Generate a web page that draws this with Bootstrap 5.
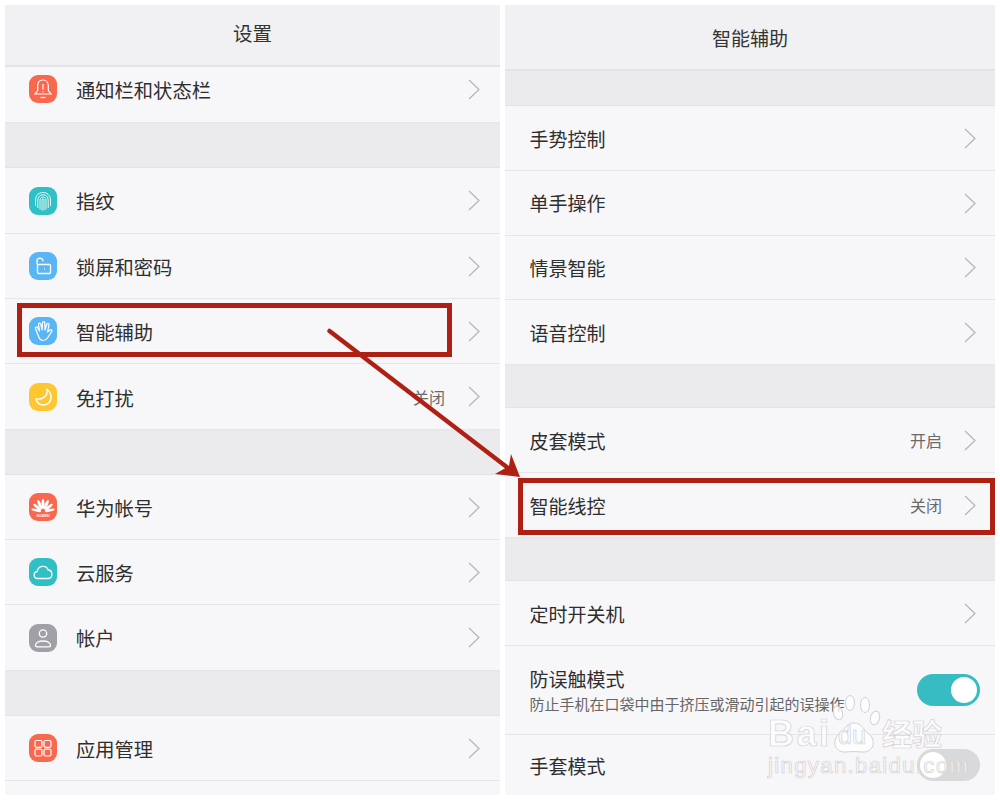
<!DOCTYPE html>
<html lang="zh">
<head>
<meta charset="utf-8">
<title>设置</title>
<link href="https://cdn.jsdelivr.net/npm/bootstrap@5.3.0/dist/css/bootstrap.min.css" rel="stylesheet">
<style>
html,body{height:800px;overflow:hidden;background:#fff}
body{font-family:"Noto Sans CJK SC","Liberation Sans",sans-serif;color:#333;position:relative}
.stage{width:1000px;height:800px;padding:5px;gap:5px}
.pane{background:#f7f6f8;height:790px;overflow:hidden;flex:none}
.pane-l{width:495px}
.pane-r{width:490px}
.head{font-size:19px;color:#333;background:#f1f0f2;border-bottom:2px solid #e3e2e4;line-height:1}
.head-l{height:62px;padding-bottom:4px;font-size:19.5px}
.head-r{height:66px}
.gap-band{background:#ebeaec;border-bottom:1px solid #e3e2e4;border-top:1px solid #e9e8ea}
.row-item{border-bottom:1px solid #e6e5e7;font-size:19px;line-height:1;color:#2e2e2e}
.pane-l .row-item{padding:0 20px 0 24px;font-size:19.3px}
.pane-r .row-item{padding:0 19px 0 24.500px}
.row-first{padding-bottom:11px!important}
.txt-up{position:relative;top:-1px}
.txt-a{position:relative;top:1px}
.txt-b{position:relative;top:2px}
.appicon{width:28px;height:28px;border-radius:9px;margin-right:19px;flex:none}
.appicon svg{width:28px;height:28px;display:block}
.c-red{background:#f9684e}.c-teal{background:#2fbfc4}.c-blue{background:#5ab5f5}.c-yel{background:#fec731}.c-gray{background:#a0a0a6}
.val{font-size:16px;color:#6a6a6a;margin-right:23px}
.pane-r .val{margin-right:22px}
.chev{width:12px;height:21px;flex:none}
.subtxt{font-size:15px;color:#666;line-height:1;margin-top:8px;white-space:nowrap}
.sw{width:63px;height:32px;border-radius:16px;flex:none;position:relative;margin-right:-4px}
.sw i{position:absolute;top:3px;width:26px;height:26px;border-radius:50%;background:#fff}
.sw-on{background:#38bcc4}.sw-on i{right:3px}
.sw-off{background:#d9d8da}.sw-off i{left:3px}
.overlay{position:absolute;left:0;top:0;width:1000px;height:800px;pointer-events:none}
.wm{position:absolute;left:766px;top:692px;width:184px;height:90px;pointer-events:none}
.wm span{position:absolute;color:rgba(255,255,255,.75);-webkit-text-stroke:.7px #d2d0d3;line-height:1;white-space:nowrap}
.wm-bai{left:2px;top:23.500px;font:700 36px/1 "Liberation Sans",sans-serif;letter-spacing:2.500px}
.wm-du{left:72px;top:31px;font:400 25px/1 "Liberation Sans",sans-serif}
.wm-jy{left:116px;top:25px;font:700 30px/1 "Noto Sans CJK SC",sans-serif}
.wm-url{left:2px;top:63px;font:400 22px/1 "Liberation Sans",sans-serif;letter-spacing:1.400px}
.wm svg{position:absolute;left:60px;top:0;width:60px;height:64px}
</style>
</head>
<body>
<svg width="0" height="0" class="position-absolute">
  <symbol id="chev" viewBox="0 0 12 21"><path d="M1 1l10 9.500L1 20" fill="none" stroke="#b5b4b7" stroke-width="1.200"/></symbol>
</svg>
<div class="stage d-flex">
  <div class="pane pane-l">
    <div class="head head-l d-flex align-items-center justify-content-center">设置</div>
    <div class="row-item row-first d-flex align-items-center" style="height:56px"><div class="appicon c-red"><svg viewBox="0 0 28 28" fill="none" stroke="#fff" stroke-width="1.200"><path d="M14 5c-3.600 0-5.300 2.800-5.300 5.800v4.700l-2.700 3.500h16l-2.700-3.500v-4.700C19.300 7.800 17.600 5 14 5z"/><path d="M11.500 22.500h5"/><path d="M14 9v5.500M14 16v1.200"/></svg></div><span class="txt-b">通知栏和状态栏</span><svg class="chev ms-auto"><use href="#chev"/></svg></div>
    <div class="gap-band" style="height:45px"></div>
    <div class="row-item d-flex align-items-center" style="height:66px"><div class="appicon c-teal"><svg viewBox="0 0 28 28" fill="none" stroke="#fff" stroke-width=".9"><path d="M6.500 19V13c0-10 15-10 15 0v6"/><path d="M8.800 21V13c0-7 10.400-7 10.400 0v8"/><path d="M11 22.500V13c0-4 6-4 6 0v9.500"/><path d="M13 23.500V13c0-1.400 2-1.400 2 0v10.500"/></svg></div><span class="txt-a">指纹</span><svg class="chev ms-auto"><use href="#chev"/></svg></div>
    <div class="row-item d-flex align-items-center" style="height:65px"><div class="appicon c-blue"><svg viewBox="0 0 28 28" fill="none" stroke="#fff" stroke-width="1.300"><rect x="8.500" y="12.500" width="13" height="9" rx="1"/><path d="M8 12.500V9.200a3 3 0 0 1 6 0"/><path d="M15 17h.8"/></svg></div><span class="txt-b">锁屏和密码</span><svg class="chev ms-auto"><use href="#chev"/></svg></div>
    <div class="row-item d-flex align-items-center" style="height:65px"><div class="appicon c-blue"><svg viewBox="0 0 28 28" fill="none" stroke="#fff" stroke-width="1.200" stroke-linecap="round" stroke-linejoin="round"><path d="M9 18L6.500 11.500c-.5-1.500 1.500-2.200 2.200-.8L10.500 14 9.500 7.500c-.2-1.600 2-2 2.300-.4L13 13l.5-7.200c.1-1.600 2.300-1.500 2.300 0L16 13l1.800-5.700c.4-1.500 2.500-1 2.200.5L18.500 15l2.500-2c1.200-1 2.600.5 1.700 1.600L18.500 21c-1 1.500-2.500 2.500-4.500 2.500-2.500 0-4-2-5-5.500z"/></svg></div><span class="txt-b">智能辅助</span><svg class="chev ms-auto"><use href="#chev"/></svg></div>
    <div class="row-item d-flex align-items-center" style="height:66px"><div class="appicon c-yel"><svg viewBox="0 0 28 28" fill="none" stroke="#fff" stroke-width="1.400"><path d="M18 6.500c1 6-3.500 10.500-11 9.500 1 4 4 6 7.500 6 4.500 0 7.500-3.500 7.500-7.500 0-3.500-1.500-6.500-4-8z"/></svg></div><span class="txt-b">免打扰</span><span class="val ms-auto">关闭</span><svg class="chev"><use href="#chev"/></svg></div>
    <div class="gap-band" style="height:45px"></div>
    <div class="row-item d-flex align-items-center" style="height:65px"><div class="appicon c-red"><svg viewBox="0 0 28 28" fill="#fff"><g><ellipse cx="14" cy="11" rx="1.500" ry="5"/><ellipse cx="14" cy="11" rx="1.500" ry="5" transform="rotate(-24 14 19)"/><ellipse cx="14" cy="11" rx="1.500" ry="5" transform="rotate(24 14 19)"/><ellipse cx="14" cy="11.500" rx="1.500" ry="5" transform="rotate(-50 14 19)"/><ellipse cx="14" cy="11.500" rx="1.500" ry="5" transform="rotate(50 14 19)"/><ellipse cx="14" cy="12" rx="1.300" ry="5" transform="rotate(-76 14 19)"/><ellipse cx="14" cy="12" rx="1.300" ry="5" transform="rotate(76 14 19)"/></g><text x="14" y="24" text-anchor="middle" font-size="3.300" font-family="Liberation Sans" font-weight="700" opacity=".9">HUAWEI</text></svg></div><span class="txt-b">华为帐号</span><svg class="chev ms-auto"><use href="#chev"/></svg></div>
    <div class="row-item d-flex align-items-center" style="height:65px"><div class="appicon c-teal"><svg viewBox="0 0 28 28" fill="none" stroke="#fff" stroke-width="1.300"><path d="M9 20.500c-5 0-5-6.500-.8-7 .8-6 9-7 11-1.500 4.500 0 5.500 8.500 0 8.500z"/></svg></div><span class="txt-b">云服务</span><svg class="chev ms-auto"><use href="#chev"/></svg></div>
    <div class="row-item d-flex align-items-center" style="height:66px"><div class="appicon c-gray"><svg viewBox="0 0 28 28" fill="none" stroke="#fff" stroke-width="1.300"><circle cx="14" cy="9.500" r="3.700"/><path d="M6.500 21.500c0-6 15-6 15 0 0 1-.8 1.300-1.500 1.300H8c-.7 0-1.500-.3-1.500-1.300z"/></svg></div><span class="txt-a">帐户</span><svg class="chev ms-auto"><use href="#chev"/></svg></div>
    <div class="gap-band" style="height:45px"></div>
    <div class="row-item d-flex align-items-center" style="height:65px"><div class="appicon c-red"><svg viewBox="0 0 28 28" fill="none" stroke="#fff" stroke-width="1.200"><rect x="6" y="6.500" width="7" height="6.800" rx="1.500"/><rect x="15" y="6.500" width="7" height="6.800" rx="1.500"/><rect x="6" y="15.200" width="7" height="6.800" rx="1.500"/><rect x="15" y="15.200" width="7" height="6.800" rx="1.500"/></svg></div><span class="txt-b">应用管理</span><svg class="chev ms-auto"><use href="#chev"/></svg></div>
  </div>
  <div class="pane pane-r">
    <div class="head head-r d-flex align-items-center justify-content-center">智能辅助</div>
    <div class="gap-band" style="height:35px;border-top:0"></div>
    <div class="row-item d-flex align-items-center" style="height:65px"><span>手势控制</span><svg class="chev ms-auto"><use href="#chev"/></svg></div>
    <div class="row-item d-flex align-items-center" style="height:65px"><span class="txt-up">单手操作</span><svg class="chev ms-auto"><use href="#chev"/></svg></div>
    <div class="row-item d-flex align-items-center" style="height:64px"><span>情景智能</span><svg class="chev ms-auto"><use href="#chev"/></svg></div>
    <div class="row-item d-flex align-items-center" style="height:65px"><span>语音控制</span><svg class="chev ms-auto"><use href="#chev"/></svg></div>
    <div class="gap-band" style="height:43px"></div>
    <div class="row-item d-flex align-items-center" style="height:65px"><span>皮套模式</span><span class="val ms-auto">开启</span><svg class="chev"><use href="#chev"/></svg></div>
    <div class="row-item d-flex align-items-center" style="height:65px"><span>智能线控</span><span class="val ms-auto">关闭</span><svg class="chev"><use href="#chev"/></svg></div>
    <div class="gap-band" style="height:43px"></div>
    <div class="row-item d-flex align-items-center" style="height:65px"><span>定时开关机</span><svg class="chev ms-auto"><use href="#chev"/></svg></div>
    <div class="row-item d-flex align-items-center" style="height:89px"><div><div>防误触模式</div><div class="subtxt">防止手机在口袋中由于挤压或滑动引起的误操作</div></div><div class="sw sw-on ms-auto"><i></i></div></div>
    <div class="row-item d-flex align-items-center border-0" style="height:60px"><span>手套模式</span><div class="sw sw-off ms-auto"><i></i></div></div>
  </div>
</div>
<div class="wm">
  <svg viewBox="0 0 60 64" fill="rgba(255,255,255,.75)" stroke="#d2d0d3" stroke-width="1"><ellipse cx="12" cy="21" rx="4.500" ry="7" transform="rotate(-15 12 21)"/><ellipse cx="24" cy="11" rx="4.500" ry="7.500"/><ellipse cx="39" cy="13" rx="4.500" ry="7.500"/><ellipse cx="49" cy="26" rx="4.500" ry="7" transform="rotate(15 49 26)"/><path d="M28 31c-7 0-9 6-14 10-9 7-6 20 6 19 5-.5 11-.5 16 0 12 1 15-12 6-19-5-4-7-10-14-10z"/></svg>
  <span class="wm-bai">Bai</span><span class="wm-du">du</span><span class="wm-jy">经验</span><span class="wm-url">jingyan.baidu.com</span>
</div>
<svg class="overlay" viewBox="0 0 1000 800" fill="none">
  <rect x="19.500" y="305.500" width="430" height="49" stroke="#ae1f14" stroke-width="5"/>
  <rect x="520.500" y="480.500" width="472" height="52" stroke="#ae1f14" stroke-width="5"/>
  <path d="M329.500 331L512 471" stroke="#ae1f14" stroke-width="4.500" stroke-linecap="round"/>
  <path d="M520 477L511 454 509 466 495 474z" fill="#ae1f14"/>
</svg>
<script src="https://cdn.jsdelivr.net/npm/bootstrap@5.3.0/dist/js/bootstrap.bundle.min.js"></script>
</body>
</html>
